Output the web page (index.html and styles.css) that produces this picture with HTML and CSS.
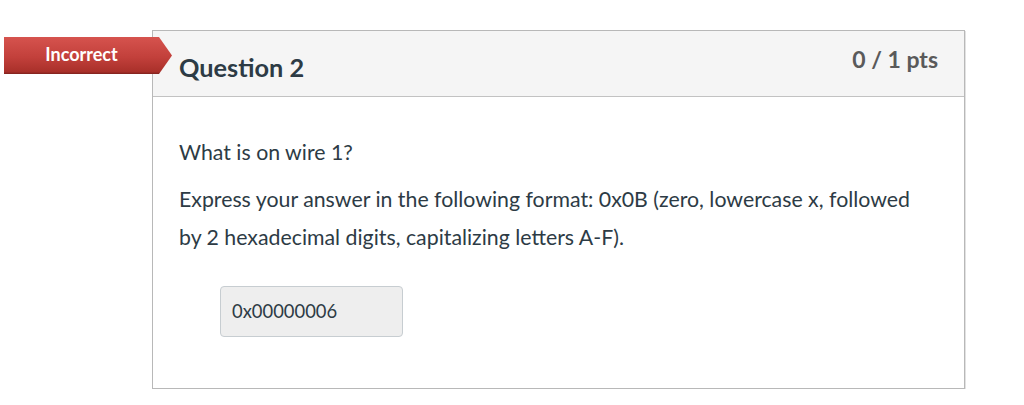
FILE: index.html
```html
<!DOCTYPE html>
<html>
<head>
<meta charset="utf-8">
<link rel="stylesheet" href="styles.css">
</head>
<body>
<div class="page">
  <div class="badge"><span class="badge-text">Incorrect</span></div>
  <div class="card">
    <div class="card-header">
      <h2 class="title">Question 2</h2>
      <div class="pts">0 / 1 pts</div>
    </div>
    <div class="card-body">
      <p class="q">What is on wire 1?</p>
      <p class="q">Express your answer in the following format: 0x0B (zero, lowercase x, followed by 2 hexadecimal digits, capitalizing letters A-F).</p>
      <div class="answer">0x00000006</div>
    </div>
  </div>
</div>
</body>
</html>
```

FILE: styles.css
```css
html, body {
  margin: 0;
  padding: 0;
  background: #ffffff;
}
body {
  font-family: Lato, "Open Sans", sans-serif;
  color: #2d3b45;
}
.page {
  position: relative;
  padding: 30px 0 0 152px;
  width: 813px;
}
.badge {
  position: absolute;
  left: 4px;
  top: 37px;
  width: 168px;
  height: 37px;
  background: linear-gradient(#d6534e 0%, #c2403b 55%, #a9302a 94%, #7e211d 100%);
  clip-path: polygon(0 0, 155px 0, 168px 50%, 155px 100%, 0 100%);
  z-index: 2;
}
.badge-text {
  display: block;
  width: 155px;
  color: #ffffff;
  font-weight: bold;
  font-size: 18px;
  line-height: 34px;
  text-align: center;
}
.card {
  border: 1px solid #b8b8b8;
  box-shadow: 1px 1px 0 #e2e2e2;
  background: #fff;
}
.card-header {
  display: flex;
  justify-content: space-between;
  align-items: flex-start;
  height: 65px;
  background: #f5f5f5;
  border-bottom: 1px solid #c2c2c2;
  padding: 0 26px;
}
.title {
  margin: 21px 0 0 0;
  font-size: 25.3px;
  font-weight: bold;
  line-height: 1.2;
  color: #2d3b45;
}
.pts {
  margin-top: 15px;
  font-size: 23px;
  font-weight: bold;
  line-height: 1.2;
  color: #5a5a5a;
}
.card-body {
  padding: 36px 26px 51px 26px;
}
.q {
  margin: 0 0 9px 0;
  font-size: 21.3px;
  line-height: 38px;
  max-width: 745px;
}
.answer {
  margin: 30px 0 0 41px;
  width: 183px;
  height: 51px;
  box-sizing: border-box;
  background: #eeeeee;
  border: 1px solid #c7cdd1;
  border-radius: 4px;
  padding: 0 11px;
  font-size: 18.4px;
  line-height: 49px;
  color: #2d3b45;
}
```
